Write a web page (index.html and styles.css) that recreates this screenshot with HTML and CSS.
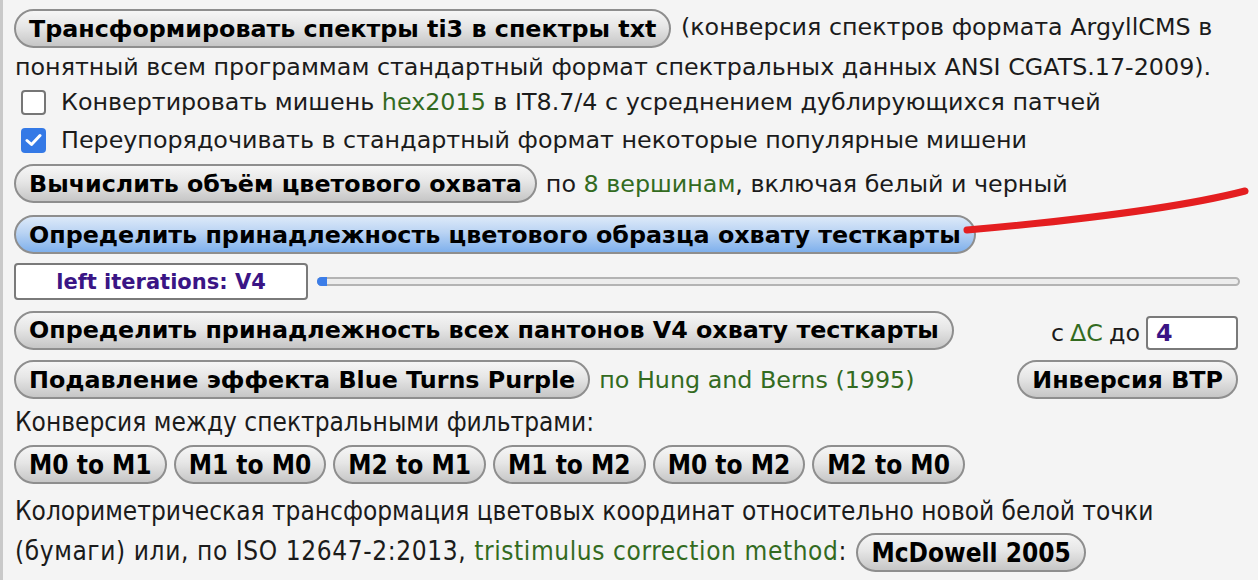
FILE: index.html
```html
<!DOCTYPE html>
<html lang="ru">

<head>
    <meta charset="UTF-8">
    <title>Спектры и охват</title>
    <link rel="stylesheet" href="styles.css">
</head>

<body>
    <div class="panel">
        <p class="para">
            <button class="btn">Трансформировать спектры ti3 в спектры txt</button>
            (конверсия спектров формата ArgyllCMS в понятный всем программам стандартный формат спектральных данных ANSI CGATS.17-2009).
        </p>

        <label class="check first">
            <span class="box"></span>
            <span>Конвертировать мишень <span class="green">hex2015</span> в IT8.7/4 с усреднением дублирующихся патчей</span>
        </label>
        <label class="check second">
            <span class="box on">
                <svg width="17" height="14" viewBox="0 0 17 14"><path d="M2 7.5 L6.5 11.5 L15 2.5" fill="none" stroke="#fff" stroke-width="3" stroke-linecap="round" stroke-linejoin="round"/></svg>
            </span>
            <span>Переупорядочивать в стандартный формат некоторые популярные мишени</span>
        </label>

        <div class="row volume">
            <button class="btn">Вычислить объём цветового охвата</button>
            <span>по <span class="green">8 вершинам</span>, включая белый и черный</span>
        </div>

        <div class="row gamut">
            <button class="btn blue">Определить принадлежность цветового образца охвату тесткарты</button>
        </div>

        <div class="row iter">
            <div class="counter">left iterations: V4</div>
            <div class="track"><div class="fill"></div></div>
        </div>

        <div class="row split pantone">
            <button class="btn">Определить принадлежность всех пантонов V4 охвату тесткарты</button>
            <span class="delta">с <span class="green">ΔC</span> до <span class="field">4</span></span>
        </div>

        <div class="row split btp">
            <span class="left">
                <button class="btn">Подавление эффекта Blue Turns Purple</button>
                <span class="green">по Hung and Berns (1995)</span>
            </span>
            <button class="btn">Инверсия BTP</button>
        </div>

        <div class="narrow">
            <div class="line caption">Конверсия между спектральными фильтрами:</div>
            <div class="row filters">
                <button class="btn">M0 to M1</button>
                <button class="btn">M1 to M0</button>
                <button class="btn">M2 to M1</button>
                <button class="btn">M1 to M2</button>
                <button class="btn">M0 to M2</button>
                <button class="btn">M2 to M0</button>
            </div>
            <div class="line colori">Колориметрическая трансформация цветовых координат относительно новой белой точки</div>
            <div class="line paper"><span class="wide">(бумаги) или, по ISO 12647-2:2013, <span class="green">tristimulus correction method</span>:</span> <button class="btn">McDowell 2005</button></div>
        </div>

        <!-- пометка красным маркером поверх скриншота -->
        <svg class="mark" width="1258" height="580" viewBox="0 0 1258 580">
            <path d="M967 230 Q1160 213 1245 191" fill="none" stroke="#e41e20" stroke-width="7" stroke-linecap="round"/>
        </svg>
    </div>
</body>

</html>
```

FILE: styles.css
```css
body {
    margin: 0;
    background-color: #f4f4f4;
    color: #1b1b1b;
    font-family: 'DejaVu Sans', Verdana, sans-serif;
    font-size: 23.8px;
}

.panel {
    position: relative;
    border-left: 3px solid #c9c9c9;
    padding: 8px 20px 0 11px;
    min-height: 572px;
}

.green {
    color: #336b1f;
}

.btn {
    display: inline-flex;
    align-items: center;
    height: 39px;
    box-sizing: border-box;
    padding: 0 13px;
    border: 2px solid #8e8e8e;
    border-radius: 20px;
    background: linear-gradient(#f6f6f6, #e6e6e6 45%, #c6c6c6);
    font-family: 'DejaVu Sans', Verdana, sans-serif;
    font-size: 23.8px;
    font-weight: bold;
    color: #000;
    vertical-align: middle;
    margin: 0;
}

.btn.blue {
    background: linear-gradient(#dce9f9, #b9d3f3 45%, #7fb0ec);
}

.para {
    margin: 0 0 0 1px;
    line-height: 38px;
}

.para .btn {
    margin-left: -1px;
    margin-right: 2px;
}

.check {
    display: flex;
    align-items: center;
    gap: 15px;
    padding-left: 7px;
}

.check.first {
    height: 32px;
}

.check.second {
    height: 38px;
    margin-top: 3px;
}

.box {
    width: 25px;
    height: 25px;
    box-sizing: border-box;
    border: 2px solid #767676;
    border-radius: 4px;
    background-color: #fff;
    display: flex;
    align-items: center;
    justify-content: center;
}

.box.on {
    border: none;
    background-color: #3479e6;
}

.row {
    display: flex;
    align-items: center;
    gap: 9px;
}

.row.split {
    justify-content: space-between;
}

.volume {
    margin-top: 5px;
}

.gamut {
    margin-top: 12px;
}

.iter {
    margin-top: 9px;
}

.counter {
    width: 294px;
    height: 37px;
    box-sizing: border-box;
    border: 2px solid #7a7a7a;
    border-radius: 4px;
    background-color: #fff;
    color: #3a1585;
    font-size: 21px;
    font-weight: bold;
    display: flex;
    align-items: center;
    justify-content: center;
}

.track {
    flex: 1;
    height: 9px;
    box-sizing: border-box;
    border: 2px solid #b3b3b3;
    border-radius: 5px;
    background-color: #ececec;
    margin-right: -2px;
    position: relative;
}

.fill {
    position: absolute;
    left: -2px;
    top: -2px;
    width: 10px;
    height: 9px;
    border-radius: 5px 0 0 5px;
    background-color: #3b7de8;
}

.pantone {
    margin-top: 10px;
}

.delta {
    display: flex;
    align-items: center;
    gap: 6px;
    margin-top: 6px;
}

.field {
    width: 92px;
    height: 34px;
    box-sizing: border-box;
    border: 2px solid #7a7a7a;
    border-radius: 4px;
    background-color: #fff;
    color: #3a1585;
    font-weight: bold;
    padding-left: 8px;
    display: flex;
    align-items: center;
}

.btp {
    margin-top: 10px;
}

.btp .left {
    display: flex;
    align-items: center;
    gap: 9px;
}

.narrow {
    font-family: 'DejaVu Sans Condensed', 'DejaVu Sans', sans-serif;
    font-size: 26px;
}

.narrow .btn {
    font-family: 'DejaVu Sans Condensed', 'DejaVu Sans', sans-serif;
    font-size: 26px;
}

.line {
    height: 38px;
    line-height: 38px;
    padding-left: 1px;
}

.caption {
    margin-top: 4px;
}

.filters {
    margin-top: 4px;
    gap: 7px;
}

.colori {
    margin-top: 8px;
}

.paper {
    margin-top: 2px;
}

.paper .wide {
    letter-spacing: 0.6px;
}

.paper .btn {
    margin-left: 2px;
}

.mark {
    position: absolute;
    left: -3px;
    top: 0;
    pointer-events: none;
}
```
